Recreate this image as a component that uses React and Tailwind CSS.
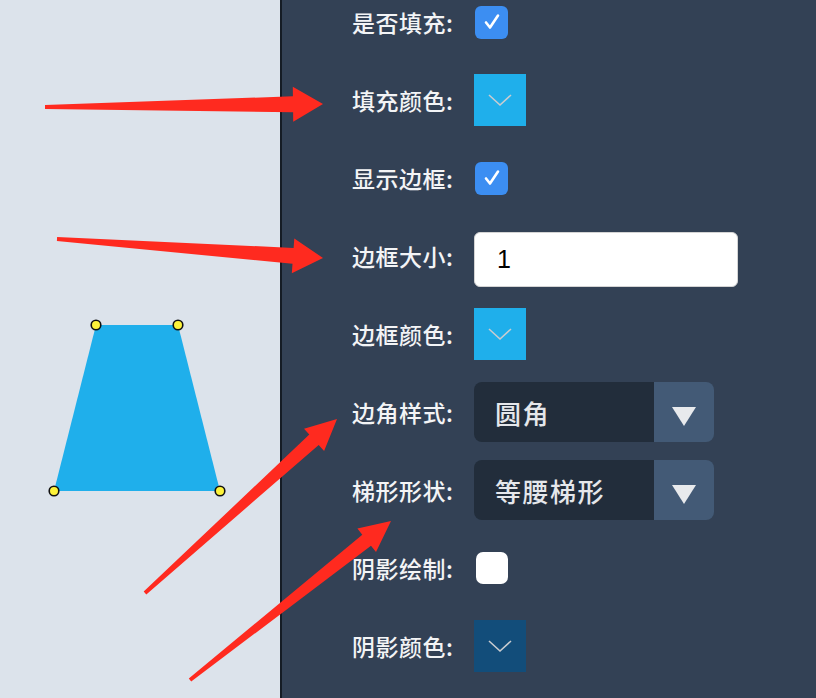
import React from 'react';

const font = { fontFamily: '"Noto Sans CJK SC", "Noto Sans", sans-serif' };

// tapered red callout arrow, from tail (tx,ty) to tip (px,py)
function arrowPoints(tx, ty, px, py, headLen, headHalf, tailHalf, neckHalf) {
    const dx = px - tx;
    const dy = py - ty;
    const len = Math.sqrt(dx * dx + dy * dy);
    const ux = dx / len;
    const uy = dy / len;
    const nx = -uy;
    const ny = ux;
    const bx = px - ux * headLen;
    const by = py - uy * headLen;
    const pts = [
        [tx + nx * tailHalf, ty + ny * tailHalf],
        [bx + nx * neckHalf, by + ny * neckHalf],
        [bx + nx * headHalf, by + ny * headHalf],
        [px, py],
        [bx - nx * headHalf, by - ny * headHalf],
        [bx - nx * neckHalf, by - ny * neckHalf],
        [tx - nx * tailHalf, ty - ny * tailHalf],
    ];
    return pts.map((p) => p[0].toFixed(1) + ',' + p[1].toFixed(1)).join(' ');
}

const arrows = [
    [45, 107, 323, 104, 30, 17.5, 2, 8],
    [57, 239, 323, 258, 30, 17.5, 2, 8],
    [145, 593, 337, 419, 31, 15, 2, 7],
    [190, 680, 391, 521, 31, 15, 2, 7],
];

function Label({ children }) {
    return <span className="w-[122px] shrink-0 text-[23px] font-medium tracking-[0.5px] text-[#f3f4f6]">{children}</span>;
}

function Checkbox({ checked }) {
    if (!checked) {
        return <div className="w-[32px] h-[32px] rounded-[7px] bg-white ml-[2px]"></div>;
    }
    return (
        <div className="w-[33px] h-[33px] rounded-[6px] bg-[#3c8ef2] flex items-center justify-center ml-[1px]">
            <svg width="20" height="20" viewBox="0 0 20 20">
                <path d="M4 10.5 L8 15.5 L16 3.5" fill="none" stroke="white" strokeWidth="2.6" strokeLinecap="round" strokeLinejoin="round" />
            </svg>
        </div>
    );
}

function Swatch({ color }) {
    return (
        <div className={`w-[52px] h-[52px] flex items-center justify-center ${color}`}>
            <svg width="26" height="14" viewBox="0 0 26 14">
                <path d="M2 2 L13 12 L24 2" fill="none" stroke="#c9ccd0" strokeWidth="1.6" />
            </svg>
        </div>
    );
}

function Select({ value }) {
    return (
        <div className="flex w-[240px] h-[60px] rounded-[8px] overflow-hidden">
            <div className="flex-1 bg-[#222d3b] flex items-center pl-[21px] text-[26px] font-medium tracking-[1.5px] text-[#e5e7eb]">{value}</div>
            <div className="w-[60px] bg-[#435a76] flex items-center justify-center">
                <svg width="24" height="20" viewBox="0 0 24 20" className="mt-[10px]">
                    <path d="M0 0 L24 0 L12 19 Z" fill="#e8eaed" />
                </svg>
            </div>
        </div>
    );
}

export default function App() {
    return (
        <div className="relative flex w-[816px] h-[698px] overflow-hidden" style={font}>
            {/* canvas */}
            <div className="relative w-[280px] h-full bg-[#dce3eb]">
                <svg width="280" height="698" className="absolute inset-0">
                    <polygon points="96,325 178,325 220,491 54,491" fill="#1fafeb" />
                    {[[96, 325], [178, 325], [54, 491], [220, 491]].map(([x, y], i) => (
                        <circle key={i} cx={x} cy={y} r="4.8" fill="#fdf33a" stroke="#111" strokeWidth="1.6" />
                    ))}
                </svg>
            </div>
            <div className="w-[2px] h-full bg-[#151c25]"></div>

            {/* property panel */}
            <div className="flex-1 h-full bg-[#334155] pl-[70px]">
                <div className="-mt-[17px] flex flex-col">
                    <div className="h-[78px] flex items-center">
                        <Label>是否填充:</Label>
                        <Checkbox checked />
                    </div>
                    <div className="h-[78px] flex items-center">
                        <Label>填充颜色:</Label>
                        <Swatch color="bg-[#1fafeb]" />
                    </div>
                    <div className="h-[78px] flex items-center">
                        <Label>显示边框:</Label>
                        <Checkbox checked />
                    </div>
                    <div className="h-[78px] flex items-center">
                        <Label>边框大小:</Label>
                        <div className="mt-[7px] w-[264px] h-[55px] bg-white rounded-[6px] border border-[#d4d4d4] flex items-center pl-[22px] text-[25px] text-black" style={{ fontFamily: '"Liberation Sans", sans-serif' }}>
                            1
                        </div>
                    </div>
                    <div className="h-[78px] flex items-center">
                        <Label>边框颜色:</Label>
                        <Swatch color="bg-[#1fafeb]" />
                    </div>
                    <div className="h-[78px] flex items-center">
                        <Label>边角样式:</Label>
                        <Select value="圆角" />
                    </div>
                    <div className="h-[78px] flex items-center">
                        <Label>梯形形状:</Label>
                        <Select value="等腰梯形" />
                    </div>
                    <div className="h-[78px] flex items-center">
                        <Label>阴影绘制:</Label>
                        <Checkbox />
                    </div>
                    <div className="h-[78px] flex items-center">
                        <Label>阴影颜色:</Label>
                        <Swatch color="bg-[#124d7a]" />
                    </div>
                </div>
            </div>

            {/* annotation arrows */}
            <svg width="816" height="698" className="absolute inset-0 pointer-events-none">
                {arrows.map((a, i) => (
                    <polygon key={i} points={arrowPoints(...a)} fill="#ff2a1f" />
                ))}
            </svg>
        </div>
    );
}
